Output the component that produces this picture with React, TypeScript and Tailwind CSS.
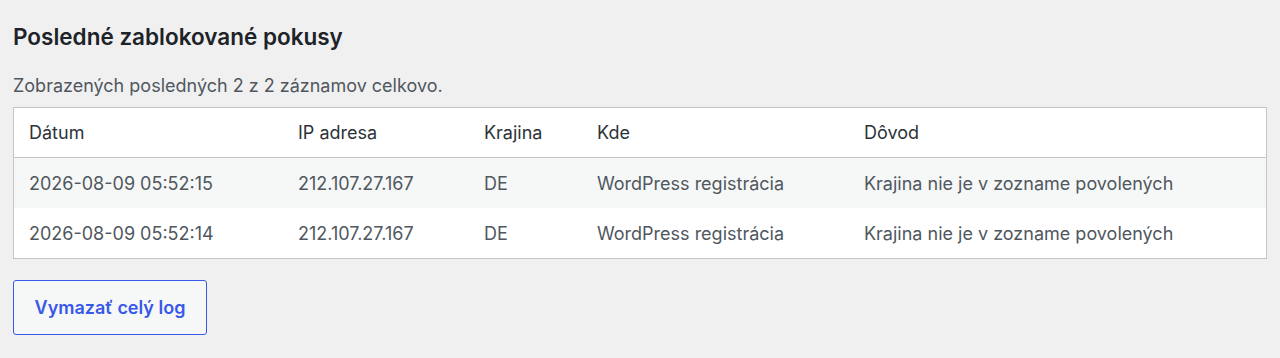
import React from "react";

const rows = [
  ["2026-08-09 05:52:15", "212.107.27.167", "DE", "WordPress registrácia", "Krajina nie je v zozname povolených"],
  ["2026-08-09 05:52:14", "212.107.27.167", "DE", "WordPress registrácia", "Krajina nie je v zozname povolených"],
];

const cols = ["w-[269px]", "w-[186px]", "w-[113px]", "w-[267px]", "flex-1"];

export default function App() {
  return (
    <div
      className="w-[1280px] h-[358px] bg-[#f0f0f1] text-[#1d2327] pl-[13px] pr-[13px] pt-[22px]"
      style={{ fontFamily: 'Inter, "Liberation Sans", sans-serif' }}
    >
      <h2 className="text-[22.5px] leading-[30px] font-semibold text-[#1d2327]">Posledné zablokované pokusy</h2>
      <p className="mt-[22px] text-[18px] leading-[24px] text-[#50575e]">Zobrazených posledných 2 z 2 záznamov celkovo.</p>
      <div className="mt-[9px] border border-[#c3c4c7] bg-white">
        <div className="flex h-[50px] items-center border-b border-[#c3c4c7] pl-[15px] text-[18px] text-[#2c3338]">
          {["Dátum", "IP adresa", "Krajina", "Kde", "Dôvod"].map((h, i) => (
            <div key={h} className={cols[i]}>{h}</div>
          ))}
        </div>
        {rows.map((r, ri) => (
          <div
            key={ri}
            className={`flex h-[50px] items-center pl-[15px] text-[18px] text-[#50575e] ${ri === 0 ? "bg-[#f6f7f7]" : "bg-white"}`}
          >
            {r.map((c, i) => (
              <div key={i} className={cols[i]}>{c}</div>
            ))}
          </div>
        ))}
      </div>
      <button className="mt-[21px] w-[194px] h-[55px] rounded-[3px] border border-[#3858e9] text-[#3858e9] text-[18px] font-semibold bg-[#f6f7f7]">
        Vymazať celý log
      </button>
    </div>
  );
}
